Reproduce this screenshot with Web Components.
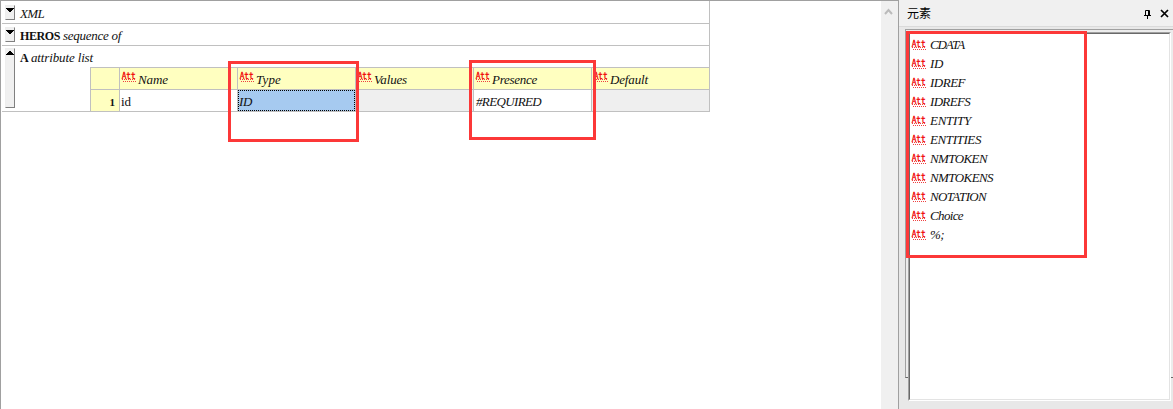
<!DOCTYPE html>
<html lang="zh">
<head>
<meta charset="utf-8">
<title>DTD</title>
<style>
html,body{margin:0;height:100%;overflow:hidden}
body{font:13px/21px "Liberation Serif",serif;color:#111;background:#fff}
</style>
</head>
<body>
<dtd-app></dtd-app>
<script>
const define = (name, html, init) => customElements.define(name, class extends HTMLElement {
  constructor(){ super(); this.attachShadow({mode:'open'}).innerHTML = html; }
  connectedCallback(){ if (init) init.call(this, this.shadowRoot); }
});

// Text whose tracking is adjusted to a given advance width.
define('fit-text', `<style>:host{display:inline-block;white-space:nowrap;font-style:italic}:host([plain]){font-style:normal}:host([strong]){font-style:normal;font-weight:bold;font-size:12px}</style><span><slot></slot></span>`, function(root){
  const want = +this.getAttribute('w'), n = this.textContent.length;
  const have = root.querySelector('span').getBoundingClientRect().width;
  if (want && n) this.style.letterSpacing = ((want - have) / n) + 'px';
});

define('att-icon', `<style>:host{display:block;width:14px;height:11px;flex:none}svg{display:block;overflow:visible}</style>
<svg width="14" height="11"><text x="-.3" y="7.5" textLength="14" lengthAdjust="spacingAndGlyphs" font-family="DejaVu Sans Mono,monospace" font-size="9.5" fill="#f00000" stroke="#f00000" stroke-width=".35">Att</text>
<path d="M0 8.5h14M1 10.5h14" stroke="#f04040" stroke-dasharray="1 1"/></svg>`);

define('fold-button', `<style>:host{display:block;box-sizing:border-box;width:10px;height:15px;background:#f0f0f0;border-right:1px solid #808080;border-bottom:1px solid #808080;border-left:1px solid #eee;border-top:1px solid #eee;flex:none}:host([open]){height:60px}svg{display:block}.u{display:none}:host([open]) .u{display:block}:host([open]) .d{display:none}</style>
<svg width="8" height="8"><path class="d" d="M0 2h8v1H7v1H6v1H5v1H3V5H2V4H1V3H0z"/><path class="u" d="M0 6h8V5H7V4H6V3H5V2H3v1H2v1H1v1H0z"/></svg>`);

define('tree-row', `<style>:host{display:flex;box-sizing:border-box;height:22px;border-bottom:1px solid #c0c0c0;padding:3px 0 0 2px}.t{margin:0 0 0 5px;height:20px;display:flex;align-items:baseline;gap:3px;line-height:18px}:host([open]){height:66px;padding-top:2px}:host([open]) .t{margin-top:1px}:host([open]) .c{margin:0 0 0 75px}.all{display:flex;flex-direction:column}fold-button{margin-left:1px}</style>
<fold-button></fold-button><div class="all"><div class="t"><slot></slot></div><div class="c"><slot name="content"></slot></div></div>`, function(root){
  if (this.hasAttribute('open')) root.querySelector('fold-button').setAttribute('open','');
});

define('head-cell', `<style>:host{display:flex;box-sizing:border-box;background:#ffffc0;border-left:1px solid #c0c0c0;border-bottom:1px solid #c0c0c0;padding:3px 0 0 2px;gap:2px;line-height:18px}</style><att-icon></att-icon><slot></slot>`);
define('data-cell', `<style>:host{display:block;box-sizing:border-box;border-left:1px solid #c0c0c0;padding-left:1px;height:21px;line-height:23px;background:#fff}:host([off]){background:#efefef}:host([sel]) div{background:#a6caf0;outline:1px dotted #000;outline-offset:-1px;height:21px;margin-left:-1px;padding-left:1px}</style><div><slot></slot></div>`);

define('attr-grid', `<style>:host{display:grid;grid-template-columns:29px repeat(5,118px);grid-template-rows:22px 21px;border-top:1px solid #c0c0c0;width:619px}
.n{box-sizing:border-box;background:#ffffc0;border-left:1px solid #c0c0c0}.h{border-bottom:1px solid #c0c0c0}.one{text-align:right;padding-right:4px;font:bold 11px/25px "Liberation Serif",serif}</style>
<div class="n h"></div><head-cell><fit-text w="30">Name</fit-text></head-cell><head-cell><fit-text w="25">Type</fit-text></head-cell><head-cell><fit-text w="33">Values</fit-text></head-cell><head-cell><fit-text w="45">Presence</fit-text></head-cell><head-cell><fit-text w="38">Default</fit-text></head-cell>
<div class="n one">1</div><data-cell><fit-text plain w="10">id</fit-text></data-cell><data-cell sel><fit-text w="13">ID</fit-text></data-cell><data-cell off></data-cell><data-cell><fit-text w="65" style="margin-left:1px">#REQUIRED</fit-text></data-cell><data-cell off></data-cell>`);

define('list-item', `<style>:host{display:flex;height:19px;line-height:19px;gap:4px}att-icon{margin-top:4px}</style><att-icon></att-icon><slot></slot>`);

define('editor-view', `<style>:host{display:flex;box-sizing:border-box;width:898px;height:409px;border-left:1px solid #a0a0a0;border-top:1px solid #a0a0a0;background:#fff}
.doc{flex:1}.tree{width:707px;margin-left:1px;border-right:1px solid #c0c0c0;padding-top:1px}.bar{width:17px;background:#f0f0f0}.bar svg{display:block;margin:6px 0 0 3px}</style>
<div class="doc"><div class="tree">
<tree-row><fit-text w="24">XML</fit-text></tree-row>
<tree-row><fit-text strong w="40">HEROS</fit-text><fit-text w="58">sequence of</fit-text></tree-row>
<tree-row open><fit-text strong w="8">A</fit-text><fit-text w="62">attribute list</fit-text><attr-grid slot="content"></attr-grid></tree-row>
</div></div><div class="bar"><svg width="10" height="9"><path d="M1 7l3.5-4L8 7" fill="none" stroke="#bbb" stroke-width="2"/></svg></div>`);

define('elements-panel', `<style>:host{display:block;box-sizing:border-box;width:275px;height:409px;background:#f0f0f0;border-left:1px solid #a0a0a0}
header{display:flex;height:27px;box-sizing:border-box;border-bottom:1px solid #dadada;padding-left:8px}
h1{font:12px/25px "Noto Sans CJK SC",sans-serif;margin:0;flex:1;color:#000}svg{display:block;margin-top:9px}.x{margin:9px 4px 0 8px}
.wrap{display:flex;flex-direction:column;background:#e8e8e8;height:382px;box-sizing:border-box;padding:2px 0 0 6px}
.frame{box-sizing:border-box;height:349px;border:1px solid #a0a0a0;border-right:0;border-bottom-color:#696969;background:#ececec;padding:2px 0 0 2px}
.list{box-sizing:border-box;width:263px;height:369px;border:1px solid;border-color:#a0a0a0 #fff #fff #a0a0a0}
.inner{box-sizing:border-box;height:367px;border:1px solid;border-color:#696969 #e3e3e3 #e3e3e3 #696969;background:#fff;padding:1px 0 0 2px}</style>
<header><h1>元素</h1><svg width="9" height="10"><path d="M2.5 6V1.5h4V6M5.5 1v5M1 6.5h7M4.5 7v3" fill="none" stroke="#000"/></svg><svg class="x" width="9" height="10"><path d="M1 1l7 7M8 1L1 8" stroke="#000" stroke-width="1.7"/></svg></header>
<div class="wrap"><div class="frame"><div class="list"><div class="inner"></div></div></div></div>`, function(root){
  const rows = [['CDATA',34],['ID',13],['IDREF',35],['IDREFS',40],['ENTITY',41],['ENTITIES',51],['NMTOKEN',57],['NMTOKENS',63],['NOTATION',56],['Choice',33],['%;',14]];
  root.querySelector('.inner').innerHTML = rows.map(([t,w]) => `<list-item><fit-text w="${w}">${t}</fit-text></list-item>`).join('');
});

define('mark-box', `<style>:host{position:absolute;box-sizing:border-box;border:3px solid #fc3838;pointer-events:none}</style>`);

define('dtd-app', `<style>:host{display:flex;position:relative;width:1173px;height:409px;overflow:hidden}</style>
<editor-view></editor-view><elements-panel></elements-panel>
<mark-box style="left:228px;top:61px;width:131px;height:81px"></mark-box>
<mark-box style="left:469px;top:60px;width:127px;height:80px"></mark-box>
<mark-box style="left:906px;top:31px;width:181px;height:227px"></mark-box>`);
</script>
</body>
</html>
